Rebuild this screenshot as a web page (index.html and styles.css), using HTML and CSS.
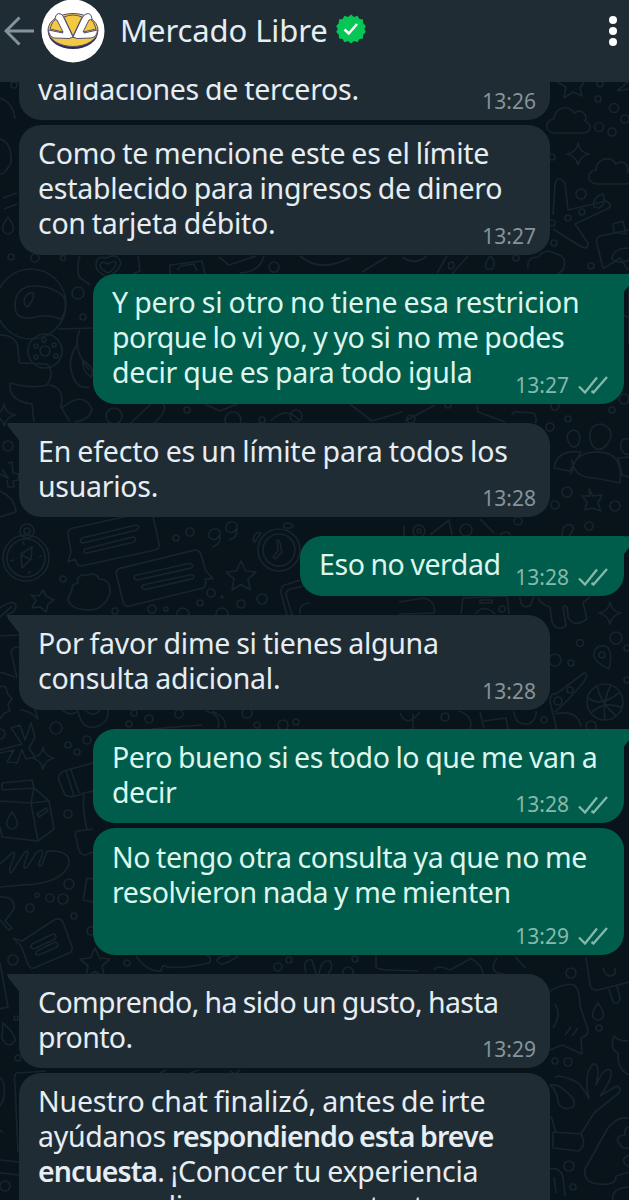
FILE: index.html
```html
<!DOCTYPE html>
<html lang="es">
<head>
    <meta charset="UTF-8">
    <meta name="viewport" content="width=device-width, initial-scale=1.0">
    <title>Mercado Libre</title>
    <link rel="stylesheet" href="styles.css">
</head>
<body>

    <!-- Shared shapes -->
    <svg class="defs" width="0" height="0">
        <defs>
            <symbol id="checks" viewBox="0 0 30 18">
                <path d="M1 10.5 L7 16.5 L19 1.500 M13.500 15 L15.500 16.500 L29 1" fill="none" stroke="currentColor" stroke-width="2.300"/>
            </symbol>
            <path id="star" d="M0 -15 L4.500 -5 L15 -4 L7 3 L9.500 14 L0 8.500 L-9 14 L-7 3 L-15 -4 L-4.500 -5 Z"/>
            <path id="spark" d="M0 -11 Q1 -2 11 0 Q2 2 0 11 Q-2 2 -11 0 Q-1 -2 0 -11 Z"/>
            <path id="cloud" d="M-12 12 C-24 12 -24 -1 -14 -2 C-14 -14 2 -17 6 -8 C14 -13 20 -6 17 0 C26 4 22 12 14 12 Z"/>
            <path id="note" d="M-34 20 L-41 23 L-38 13 L-41 -5 Q-41 -10 -36 -11 L38 -27 Q43 -28 44 -23 L50 5 Q51 10 46 11 L-28 27 Q-32 27 -34 20 Z M-27 -1 L27 -14 Q32 -13 28 -9 L-26 4 Q-31 3 -27 -1 Z M-24 10 L24 -2 Q29 -1 25 3 L-22 14 Q-27 14 -24 10 Z"/>
            <path id="drop" d="M0 -9 Q7 1 5 5 Q0 11 -5 5 Q-7 1 0 -9 Z"/>
        </defs>
    </svg>

    <header class="header">
        <svg class="back" viewBox="0 0 30 30">
            <path d="M30 15 H2 M15.500 1.500 L2 15 L15.500 28.500" fill="none" stroke="currentColor" stroke-width="3"/>
        </svg>
        <svg class="avatar" viewBox="0 0 64 64">
            <circle cx="32" cy="32" r="31.500" fill="#fff"/>
            <ellipse cx="32" cy="33" rx="25" ry="17" fill="#2f2b5c"/>
            <ellipse cx="32" cy="31" rx="25" ry="16.500" fill="#f3c944" stroke="#54506e" stroke-width="1"/>
            <path d="M7.500 31 L22 34 L14 20 Q15 13 20 15 Q22 16 24 21 L32 38 L40 21 Q42 16 45 15 Q50 13 51 20 L43 34 L56.500 31 Q56 38 50 39 L36 39.500 Q32 37 28 39.500 L13 39 Q8 37 7.500 31 Z" fill="#fff" stroke="#54506e" stroke-width="1"/>
            <path d="M10 27 Q13 19 16 21 L22 33 L9 30 Z M54 27 Q51 19 48 21 L42 33 L55 30 Z M23 18 Q32 14 41 18 L32 37 Z" fill="#f3c944" stroke="#54506e" stroke-width="1"/>
        </svg>
        <h1 class="title">Mercado Libre</h1>
        <svg class="badge" viewBox="0 0 30 30">
            <path d="M15 .500 L18 3 L21.500 1.800 L23.500 5 L27 5.500 L27.200 9.200 L29.800 12 L28.300 15 L29.800 18 L27.200 20.800 L27 24.500 L23.500 25 L21.500 28.200 L18 27 L15 29.500 L12 27 L8.500 28.200 L6.500 25 L3 24.500 L2.800 20.800 L.200 18 L1.700 15 L.200 12 L2.800 9.200 L3 5.500 L6.500 5 L8.500 1.800 L12 3 Z" fill="#06c655"/>
            <path d="M8.500 15.500 L12.800 19.500 L21 10" fill="none" stroke="#fff" stroke-width="2.600"/>
        </svg>
        <svg class="menu" viewBox="0 0 8 32">
            <circle cx="4" cy="5" r="4"/>
            <circle cx="4" cy="16" r="4"/>
            <circle cx="4" cy="27" r="4"/>
        </svg>
    </header>

    <main class="chat">

        <!-- Wallpaper doodles -->
        <svg class="wallpaper" viewBox="0 82 629 1118">
            <!-- right side, top -->
            <path d="M557 82 L566 87 L564 98 L573 92 L582 96 L580 88 L584 82 M617 91 L628 82 M617 91 L629 89"/>
            <use href="#cloud" x="568" y="121"/>
            <use href="#cloud" x="610" y="172"/>
            <use href="#spark" x="578" y="154"/>
            <path d="M553 215 L555 184 Q558 174 565 183 L568 210 L606 201 Q614 205 607 209 L575 224 L588 243 Q588 251 580 246 L553 229 M594 207 Q592 197 603 194 Q607 203 599 208 Z"/>
            <path d="M629 230 L600 236 Q595 238 597 244 L603 268 M614 232 L613 224 L623 221 L626 234 Z M629 248 Q613 248 612 259 Q618 265 629 260"/>
            <path d="M528 269 Q526 257 538 257 Q547 247 556 254 Q568 256 563 270 L558 274 M437 273 L447 256 M452 274 L468 256 M449 269 Q447 261 453 262 Q456 269 449 269 M490 256 Q480 271 492 269 Q497 262 490 256 M603 269 L620 258 L628 270"/>
            <!-- left side, top -->
            <path d="M0 98 Q13 102 15 119 M0 139 Q12 142 11 163 Q3 176 0 174 M3 198 L17 193 M4 209 L17 204"/>
            <use href="#drop" x="8" y="226"/>
            <path d="M80 256 Q76 266 79 277 L90 285 M138 256 L140 271 L133 274 M96 265 Q96 255 107 258 Q117 252 121 263 Q119 272 107 277 Q96 272 96 265 Z M100 265 Q102 260 108 264 Q116 259 116 264 Q113 271 108 273 Q101 270 100 265 Z"/>
            <path d="M170 274 V265 L202 261 L205 274 M177 270 L181 266 L194 264 L197 271 M219 257 L229 265 L256 256 M240 273 Q260 272 264 256 M300 256 Q320 273 350 258 M362 272 L387 257 M402 257 Q415 266 427 256"/>
            <!-- astronaut -->
            <circle cx="31" cy="304" r="35"/>
            <path d="M15 306 Q15 286 35 286 Q53 286 64 297 Q68 310 61 319 Q46 313 32 318 Q15 320 15 306 Z M24 302 Q25 292 33 293 Q35 296 30 304 Q27 310 24 302 Z"/>
            <path d="M0 335 Q16 335 18 348 Q19 364 20 363 L47 364 Q55 373 47 385 Q31 389 10 383 Q8 401 32 404 L34 422 M49 385 Q65 387 61 407 L70 422 M62 408 Q83 390 92 409 Q90 420 75 422 M58 329 L93 328 M77 345 Q67 359 72 374 Q77 390 89 387 M80 330 Q71 347 89 370 M83 360 Q97 371 91 377 Q81 370 83 360"/>
            <circle cx="45" cy="351" r="17"/>
            <circle cx="45" cy="351" r="5"/>
            <circle cx="36" cy="346" r="2"/>
            <circle cx="44" cy="340" r="2"/>
            <circle cx="54" cy="345" r="2"/>
            <circle cx="36" cy="357" r="2"/>
            <circle cx="56" cy="356" r="2"/>
            <use href="#spark" x="4" y="415"/>
            <!-- between first answer and the reply -->
            <path d="M131 423 L151 404 M154 423 Q169 410 163 404 M205 404 L220 411 L237 404 M271 421 Q286 405 300 421 M350 404 L372 421 L402 412 M477 405 L478 412 L505 422 M512 415 Q512 411 520 412 L534 413 Q538 420 535 423 M405 421 L435 405"/>
            <!-- people -->
            <path d="M572 459 Q573 478 595 478 L620 483 Q624 450 594 452 Q573 454 572 472 L570 474 M554 468 Q557 449 581 452 L570 471 Z M567 438 Q567 431 574 430 Q583 433 578 445 Q571 451 567 438 Z M590 434 Q591 424 601 424 Q614 428 610 440 Q604 451 596 449 Q589 444 590 434 Z M629 439 Q619 437 621 449 Q625 456 629 454 M629 457 L618 458 L622 475 L629 477"/>
            <path d="M589 489 L593 496 L602 495 L598 503 L601 511 L592 508 L585 510 L587 502 L582 496 L590 496 Z M629 285 V345 M624 315 L629 318"/>
            <path d="M0 474 L8 478 L2 469 M8 463 L12 462 L13 473 L19 474 L18 480 L13 481 L14 487 L8 487 L7 480 M0 491 Q15 498 16 512 L0 517"/>
            <!-- compass, notes, clock, phone -->
            <circle cx="26" cy="558" r="23"/>
            <circle cx="26" cy="558" r="19"/>
            <circle cx="27" cy="531" r="7"/>
            <circle cx="27" cy="531" r="3"/>
            <path d="M32 547 L21 554 L22 568 L31 559 Z M22 555 L31 560 M10 561 L14 560 M23 541 L24 545 M42 556 L39 557 M29 574 L30 571"/>
            <use href="#note" x="109" y="539"/>
            <g transform="matrix(-1 0 0 1 166 576) rotate(26)"><use href="#note"/></g>
            <path d="M72 590 Q71 584 78 583 Q76 574 87 575 Q97 572 99 579 Q111 579 110 593 Q104 611 87 610 Q69 609 68 598 Z"/>
            <use href="#star" x="241" y="576"/>
            <path d="M43 590 L46 596 L54 600 L48 604 L46 612 L40 607 L32 608 L36 600 L31 595 L39 596 Z M0 608 Q14 598 16 606 Q16 612 6 615 M0 617 L12 606"/>
            <path d="M220 535 Q221 545 212 547 M220 535 Q215 543 209 537 Q208 529 215 529 Q221 529 220 535 M237 528 Q238 538 229 540 M237 528 Q232 536 226 530 Q225 522 232 522 Q238 522 237 528 M253 541 Q254 531 261 533 L255 542 Z M283 527 Q286 519 293 526 Q290 530 283 527"/>
            <circle cx="279" cy="550" r="21"/>
            <circle cx="279" cy="550" r="16"/>
            <path d="M277 540 Q279 539 280 543 L282 552 L275 559 L273 557 L278 551 Z M287 615 L281 593 Q280 585 288 584 L300 580 M292 615 L286 595 Q286 590 291 589 L303 586 M300 614 Q298 604 310 603"/>
            <circle cx="419" cy="531" r="6"/>
            <circle cx="419" cy="531" r="2"/>
            <path d="M404 526 V536 M430 535 L449 520 L452 535 M562 536 Q562 523 571 525 Q576 528 569 536 M500 535 Q506 529 511 535 M480 519 L494 533"/>
            <path d="M399 602 L424 598 Q437 602 434 613 L399 614 M461 614 L463 598 L507 596 L509 614 M475 614 Q484 603 495 614 M480 600 H492 V603 H480 Z M520 597 Q520 609 530 606 L534 596 M538 597 Q540 604 550 607 L552 622 Q557 632 566 626 L563 607 Q568 602 568 618 Q575 628 587 619 L583 603 L590 597"/>
            <use href="#spark" x="610" y="613"/>
            <!-- pin, dinosaur tail, ball -->
            <path d="M609 669 Q592 661 594 653 Q597 643 607 647 Q613 652 609 669 Z M550 703 Q550 692 556 694 L584 673 Q590 674 582 684 Q567 702 555 712 M550 702 L557 730 M555 714 Q578 709 581 727"/>
            <circle cx="602" cy="655" r="3"/>
            <circle cx="605" cy="702" r="18"/>
            <path d="M588 698 Q601 708 620 692 M591 713 Q605 700 622 708 M597 686 Q600 702 616 716 M611 685 Q602 700 605 720"/>
            <path d="M0 636 L19 635 M11 651 Q15 645 19 648 M11 651 L17 678 M0 672 L15 677 M0 687 Q7 684 7 693 L12 699 L8 704 L10 711 L4 713 L0 719 M20 710 Q29 710 38 719 L35 709 M62 710 Q72 717 78 711 Q82 730 95 727 Q109 724 108 710 M85 710 Q93 718 100 710"/>
            <path d="M205 711 Q222 714 218 728 M212 711 Q228 718 225 728 M151 729 L202 725 M400 713 Q407 729 420 712 M413 729 V714 M458 711 Q474 715 470 729 M480 712 L484 728 M484 721 L506 718 L508 729 M514 711 Q514 725 529 724 Q537 719 536 711"/>
            <!-- windmill toy, milk, bread -->
            <path d="M0 750 L22 744 L11 728 L20 725 L25 740 L31 723 L35 737 L29 748 L35 757 L26 759 L22 750 L17 763 L7 762 L14 750 L0 753"/>
            <use href="#spark" x="43" y="758"/>
            <path d="M2 790 L2 783 L32 780 L34 788 L49 801 L54 829 L38 841 L2 837 L0 827 M2 790 L34 788 L31 803 L0 801 M31 803 L38 841 M31 803 L49 801 M37 814 L46 808 L48 811 L39 817 Z"/>
            <use href="#drop" x="12" y="821"/>
            <path d="M93 763 L67 770 Q55 774 60 783 L65 795 Q70 799 84 793 L93 791 M66 771 L74 796 M71 770 L79 793 M84 793 Q82 810 87 829 M93 829 L78 831 Q73 832 77 840 Q78 855 85 855 L93 852"/>
            <path d="M0 864 L12 853 Q18 849 10 867 Q9 875 12 872 L24 853 Q31 846 25 862 Q22 872 28 866 L36 853 Q46 845 41 858 Q36 870 42 865 L47 851 Q71 850 69 864 Q62 884 22 885 L0 887"/>
            <path d="M93 879 L87 878 L83 900 L93 902 M0 897 Q15 896 14 909 L5 921 L12 928 L9 930 L0 920"/>
            <path d="M13 938 L22 941 L54 920 Q60 917 63 922 L72 947 Q73 952 67 954 L34 968 Q30 969 28 964 L21 946 Z M32 944 L53 934 Q58 935 55 939 L34 949 Q29 948 32 944 M37 951 L55 942 Q60 943 57 947 L39 955 Q34 955 37 951"/>
            <use href="#star" x="95" y="963"/>
            <path d="M0 963 L8 1007 L0 1009 M136 956 Q147 972 161 971 Q162 963 167 967 Q181 969 209 963 Q213 957 206 955 M217 962 Q217 955 230 956 M218 962 Q221 968 238 956 M306 973 Q302 958 312 960 L316 974 M319 974 Q321 959 330 961 Q334 967 328 974 M376 956 L376 967 Q378 970 390 970 L418 971 M434 970 Q437 964 450 970 L470 959 M470 958 Q483 965 483 974 M497 958 Q487 973 504 974 M515 957 L526 968"/>
            <!-- right side, bottom -->
            <path d="M586 957 L590 985 Q592 991 598 990 L629 982 M603 968 Q607 980 615 974 L615 968 M609 989 L613 1002 Q619 1006 620 998 L617 986 M550 991 Q571 980 576 987 Q580 993 580 1006 L588 1030 Q589 1035 581 1038 L582 1054 L562 1045 L550 1050 M555 1004 Q562 1014 553 1028 M565 1035 L571 1027 M572 1036 L578 1028"/>
            <use href="#drop" x="598" y="1012"/>
            <path d="M629 1040 Q621 1043 614 1036 Q609 1049 618 1053 Q617 1069 629 1075 M556 1078 Q555 1074 570 1079 Q581 1082 589 1099 Q583 1074 593 1064 Q601 1063 596 1085 Q605 1065 611 1071 Q613 1079 600 1096 L617 1086 Q624 1090 615 1096 L594 1113 L581 1134 L553 1132 M550 1085 Q558 1084 564 1090 Q578 1100 573 1107 Q562 1112 558 1102 Q558 1092 550 1085 M553 1132 L553 1148 L579 1151 Q587 1144 581 1134 M551 1116 L556 1133"/>
            <path d="M629 1118 Q614 1116 605 1133 L585 1169 Q583 1183 599 1184 Q616 1186 616 1176 L629 1172 M629 1127 Q624 1127 625 1135 Q614 1136 619 1143 Q623 1150 629 1148 M629 1155 Q618 1160 629 1167 M550 1169 Q560 1167 563 1177 L565 1196 M554 1177 L556 1193 M613 1200 Q611 1188 629 1187"/>
            <!-- left side, bottom -->
            <path d="M3 1023 Q16 1034 15 1041 Q8 1050 2 1038 Z M0 1077 Q7 1085 3 1101 L0 1106 M0 1130 L3 1133 M19 1073 Q13 1071 15 1085 L18 1152 M0 1160 L20 1162 M0 1173 L20 1175 M19 1073 L46 1071 M160 1073 L166 1070 M190 1073 L199 1070 M230 1071 L235 1074 L240 1070"/>
            <!-- bubbles -->
            <g>
                <circle cx="598" cy="99" r="3"/><circle cx="614" cy="108" r="4.500"/><circle cx="600" cy="84" r="3"/>
                <circle cx="599" cy="127" r="4.500"/><circle cx="612" cy="132" r="4"/><circle cx="625" cy="119" r="4"/>
                <circle cx="552" cy="157" r="3"/><circle cx="581" cy="194" r="5"/><circle cx="568" cy="218" r="3"/>
                <circle cx="582" cy="212" r="3"/><circle cx="552" cy="223" r="3"/><circle cx="554" cy="243" r="3"/>
                <circle cx="14" cy="85" r="3"/><circle cx="516" cy="258" r="3"/><circle cx="591" cy="266" r="3"/>
                <circle cx="11" cy="257" r="3"/><circle cx="35" cy="258" r="4"/><circle cx="63" cy="258" r="2.500"/>
                <circle cx="274" cy="267" r="5"/><circle cx="78" cy="293" r="6"/><circle cx="83" cy="317" r="3"/>
                <circle cx="114" cy="416" r="8"/><circle cx="187" cy="410" r="3"/><circle cx="233" cy="420" r="8"/>
                <circle cx="262" cy="420" r="3"/><circle cx="296" cy="416" r="6"/><circle cx="411" cy="419" r="4"/>
                <circle cx="448" cy="405" r="3"/><circle cx="555" cy="406" r="4"/><circle cx="568" cy="419" r="3"/>
                <circle cx="612" cy="410" r="3"/><circle cx="624" cy="399" r="5"/><circle cx="550" cy="427" r="4"/>
                <circle cx="8" cy="446" r="5"/><circle cx="567" cy="492" r="5"/><circle cx="555" cy="505" r="4"/>
                <circle cx="615" cy="506" r="5"/><circle cx="518" cy="521" r="4"/><circle cx="466" cy="530" r="6"/>
                <circle cx="589" cy="526" r="4"/><circle cx="176" cy="538" r="3"/><circle cx="190" cy="532" r="4"/>
                <circle cx="63" cy="579" r="3"/><circle cx="211" cy="593" r="4"/><circle cx="222" cy="597" r="1"/>
                <circle cx="200" cy="603" r="3"/><circle cx="241" cy="604" r="4"/><circle cx="262" cy="599" r="5"/>
                <circle cx="115" cy="611" r="3"/><circle cx="152" cy="609" r="4"/><circle cx="166" cy="609" r="2"/>
                <circle cx="183" cy="614" r="6"/><circle cx="222" cy="614" r="6"/><circle cx="502" cy="609" r="3"/>
                <circle cx="616" cy="638" r="6"/><circle cx="580" cy="643" r="3.500"/><circle cx="555" cy="660" r="6"/>
                <circle cx="571" cy="663" r="3"/><circle cx="627" cy="648" r="3"/><circle cx="558" cy="701" r="4"/>
                <circle cx="570" cy="690" r="3"/><circle cx="627" cy="680" r="3"/><circle cx="445" cy="717" r="4"/>
                <circle cx="544" cy="720" r="3"/><circle cx="591" cy="726" r="5"/><circle cx="56" cy="728" r="6"/>
                <circle cx="134" cy="713" r="3"/><circle cx="149" cy="719" r="4"/><circle cx="129" cy="724" r="3"/>
                <circle cx="179" cy="714" r="4"/><circle cx="247" cy="713" r="5"/><circle cx="257" cy="725" r="3"/>
                <circle cx="283" cy="725" r="5"/><circle cx="296" cy="722" r="3"/><circle cx="68" cy="745" r="3"/>
                <circle cx="77" cy="752" r="3"/><circle cx="87" cy="740" r="4"/><circle cx="0" cy="734" r="5"/>
                <circle cx="68" cy="814" r="4"/><circle cx="69" cy="884" r="5"/><circle cx="63" cy="899" r="5"/>
                <circle cx="50" cy="898" r="4"/><circle cx="37" cy="895" r="2"/><circle cx="30" cy="908" r="4"/>
                <circle cx="74" cy="916" r="3"/><circle cx="91" cy="931" r="4"/><circle cx="13" cy="960" r="5"/>
                <circle cx="127" cy="963" r="3"/><circle cx="278" cy="967" r="4"/><circle cx="289" cy="960" r="3"/>
                <circle cx="355" cy="959" r="3"/><circle cx="348" cy="972" r="5"/><circle cx="571" cy="973" r="5"/>
                <circle cx="599" cy="1028" r="3"/><circle cx="555" cy="1061" r="3"/><circle cx="568" cy="1062" r="4"/>
                <circle cx="569" cy="1166" r="5"/><circle cx="573" cy="1187" r="3"/><circle cx="5" cy="1186" r="5"/>
                <circle cx="18" cy="1058" r="3"/><circle cx="16" cy="1018" r="2"/>
            </g>
        </svg>

        <div class="message in first">
            <p class="text">validaciones de terceros.</p>
            <span class="meta">13:26</span>
        </div>
        <div class="message in">
            <p class="text">Como te mencione este es el límite<br>establecido para ingresos de dinero<br>con tarjeta débito.</p>
            <span class="meta">13:27</span>
        </div>

        <div class="message out tail">
            <p class="text"><span class="loose">Y pero si otro no tiene esa restricion</span><br><span class="snug">porque lo vi yo, y yo si no me podes</span><br>decir que es para todo igula</p>
            <span class="meta">13:27 <svg class="checks"><use href="#checks"/></svg></span>
        </div>

        <div class="message in tail">
            <p class="text"><span class="loose">En efecto es un límite para todos los</span><br>usuarios.</p>
            <span class="meta">13:28</span>
        </div>

        <div class="message out tail short">
            <p class="text snug">Eso no verdad</p>
            <span class="meta">13:28 <svg class="checks"><use href="#checks"/></svg></span>
        </div>

        <div class="message in tail">
            <p class="text">Por favor dime si tienes alguna<br>consulta adicional.</p>
            <span class="meta">13:28</span>
        </div>

        <div class="message out tail">
            <p class="text snug">Pero bueno si es todo lo que me van a<br>decir</p>
            <span class="meta">13:28 <svg class="checks"><use href="#checks"/></svg></span>
        </div>
        <div class="message out wrapped">
            <p class="text snug">No tengo otra consulta ya que no me<br>resolvieron nada y me mienten</p>
            <span class="meta">13:29 <svg class="checks"><use href="#checks"/></svg></span>
        </div>

        <div class="message in tail">
            <p class="text tight">Comprendo, ha sido un gusto, hasta<br>pronto.</p>
            <span class="meta">13:29</span>
        </div>
        <div class="message in">
            <p class="text"><span class="loose">Nuestro chat finalizó, antes de irte</span><br>ayúdanos <b>respondiendo esta breve</b><br><b>encuesta</b>. ¡Conocer tu experiencia<br>como un dia mas en nuestro tema</p>
        </div>
    </main>

</body>
</html>
```

FILE: styles.css
```css
* {
    box-sizing: border-box;
}

body {
    margin: 0;
    height: 1200px;
    display: flex;
    flex-direction: column;
    overflow: hidden;
    background-color: #08131a;
    font-family: "Noto Sans", sans-serif;
}

.defs {
    position: absolute;
}

/* Header */
.header {
    flex: none;
    display: flex;
    align-items: flex-start;
    height: 82px;
    background-color: #202c33;
    color: #e6edf3;
}

.back {
    width: 30px;
    height: 30px;
    margin: 16px 7px 0 4px;
    color: #83949d;
}

.avatar {
    width: 64px;
    height: 64px;
    margin-top: -1px;
}

.title {
    margin: 9px 0 0 15px;
    font-size: 31px;
    font-weight: 400;
    line-height: 42px;
    letter-spacing: -0.1px;
    white-space: nowrap;
}

.badge {
    width: 30px;
    height: 30px;
    margin: 14px 0 0 8px;
}

.menu {
    width: 8px;
    height: 32px;
    margin: 15px 12px 0 auto;
    fill: #fff;
}

/* Chat */
.chat {
    flex: 1;
    min-height: 0;
    position: relative;
    display: flex;
    flex-direction: column;
    overflow: hidden;
    padding: 0 5px 0 19px;
}

.wallpaper {
    position: absolute;
    top: 0;
    left: 0;
    width: 629px;
    height: 1118px;
    fill: none;
    stroke: #18242b;
    stroke-width: 1.7;
    stroke-linejoin: round;
}

/* Bubbles */
.message {
    flex: none;
    position: relative;
    width: 531px;
    margin-top: 5px;
    padding: 11.2px 0 13.5px 19px;
    border-radius: 22px;
}

.message.first {
    margin-top: -21.5px;
}

.in {
    align-self: flex-start;
    background-color: #202c33;
    color: #e6edf3;
}

.out {
    align-self: flex-end;
    background-color: #005d4b;
    color: #dcf6ee;
}

.message.tail {
    margin-top: 19px;
}

.in.tail {
    border-top-left-radius: 0;
}

.out.tail {
    border-top-right-radius: 0;
}

.tail::before {
    content: "";
    position: absolute;
    top: 0;
    width: 13px;
    height: 19px;
}

.in.tail::before {
    left: -12px;
    background-color: #202c33;
    clip-path: polygon(0 0, 100% 0, 100% 100%, 1px 4px);
}

.out.tail::before {
    right: -12px;
    background-color: #005d4b;
    clip-path: polygon(0 0, 100% 0, 12px 4px, 0 100%);
}

.short {
    width: 324px;
}

.message.wrapped {
    padding-bottom: 45px;
}

.text {
    margin: 0;
    font-size: 28.5px;
    line-height: 35px;
    letter-spacing: -0.28px;
    word-spacing: -1px;
    white-space: nowrap;
}

.text b {
    font-weight: 600;
    letter-spacing: -0.9px;
}

.loose {
    letter-spacing: -0.18px;
}

.snug {
    letter-spacing: -0.43px;
}

.tight {
    letter-spacing: -0.6px;
}

.meta {
    position: absolute;
    right: 14px;
    bottom: 4px;
    display: flex;
    align-items: center;
    gap: 9px;
    font-size: 21px;
    line-height: 29px;
    color: #85939a;
}

.out .meta {
    right: 16px;
    color: #87b8ac;
}

.checks {
    width: 30px;
    height: 18px;
}
```
